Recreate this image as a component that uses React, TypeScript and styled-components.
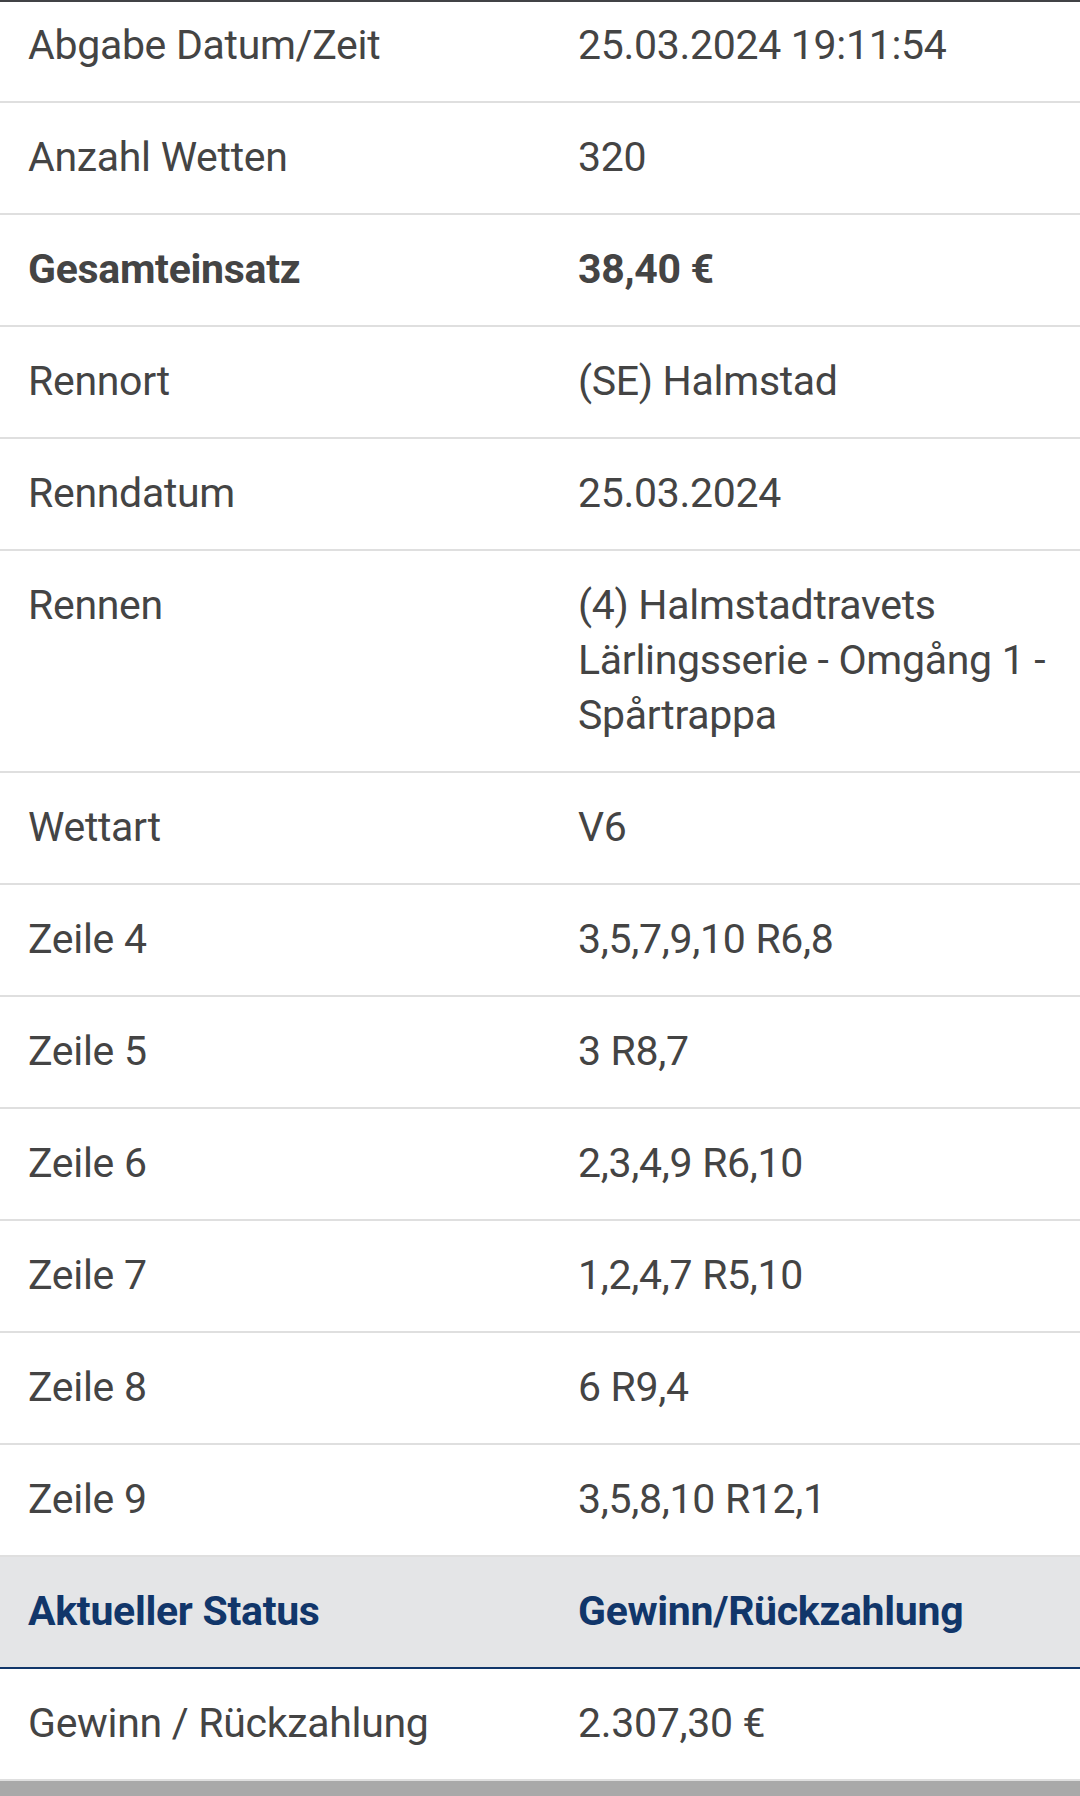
import React from "react";
import styled, { createGlobalStyle } from "styled-components";

const GlobalStyle = createGlobalStyle`
  html, body {
    margin: 0;
    padding: 0;
    background: #fff;
  }
  body {
    font-family: Roboto, "Liberation Sans", Arial, sans-serif;
    -webkit-font-smoothing: antialiased;
  }
`;

const Page = styled.div`
  width: 1080px;
  height: 1796px;
  overflow: hidden;
  display: flex;
  flex-direction: column;
  background: #fff;
`;

const TopEdge = styled.div`
  height: 2px;
  flex-shrink: 0;
  background: #414346;
`;

const Table = styled.div`
  display: flex;
  flex-direction: column;
`;

const Row = styled.div<{ $first?: boolean; $head?: boolean }>`
  display: grid;
  grid-template-columns: 550px 1fr;
  padding: ${(p) => (p.$first ? "16px" : "27.5px")} 0 27.5px;
  background: ${(p) => (p.$head ? "#e4e5e7" : "#fff")};
  border-bottom: 2px solid ${(p) => (p.$head ? "#11366a" : "#dfdfdf")};
`;

const Cell = styled.div<{ $bold?: boolean; $head?: boolean }>`
  padding: 0 18px 0 28px;
  font-size: 41px;
  line-height: 55px;
  letter-spacing: -0.3px;
  font-weight: ${(p) => (p.$bold || p.$head ? 700 : 400)};
  color: ${(p) => (p.$head ? "#11366a" : "#444")};
`;

const BottomBar = styled.div`
  flex: 1;
  background: #a9a9a9;
`;

type Item = { label: string; value: string; bold?: boolean };

const items: Item[] = [
  { label: "Abgabe Datum/Zeit", value: "25.03.2024 19:11:54" },
  { label: "Anzahl Wetten", value: "320" },
  { label: "Gesamteinsatz", value: "38,40 €", bold: true },
  { label: "Rennort", value: "(SE) Halmstad" },
  { label: "Renndatum", value: "25.03.2024" },
  {
    label: "Rennen",
    value: "(4) Halmstadtravets Lärlingsserie - Omgång 1 - Spårtrappa",
  },
  { label: "Wettart", value: "V6" },
  { label: "Zeile 4", value: "3,5,7,9,10 R6,8" },
  { label: "Zeile 5", value: "3 R8,7" },
  { label: "Zeile 6", value: "2,3,4,9 R6,10" },
  { label: "Zeile 7", value: "1,2,4,7 R5,10" },
  { label: "Zeile 8", value: "6 R9,4" },
  { label: "Zeile 9", value: "3,5,8,10 R12,1" },
];

export default function App() {
  return (
    <>
      <GlobalStyle />
      <Page>
        <TopEdge />
        <Table>
          {items.map((it, i) => (
            <Row key={it.label} $first={i === 0}>
              <Cell $bold={it.bold}>{it.label}</Cell>
              <Cell $bold={it.bold}>{it.value}</Cell>
            </Row>
          ))}
          <Row $head>
            <Cell $head>Aktueller Status</Cell>
            <Cell $head>Gewinn/Rückzahlung</Cell>
          </Row>
          <Row>
            <Cell>Gewinn / Rückzahlung</Cell>
            <Cell>2.307,30 €</Cell>
          </Row>
        </Table>
        <BottomBar />
      </Page>
    </>
  );
}
